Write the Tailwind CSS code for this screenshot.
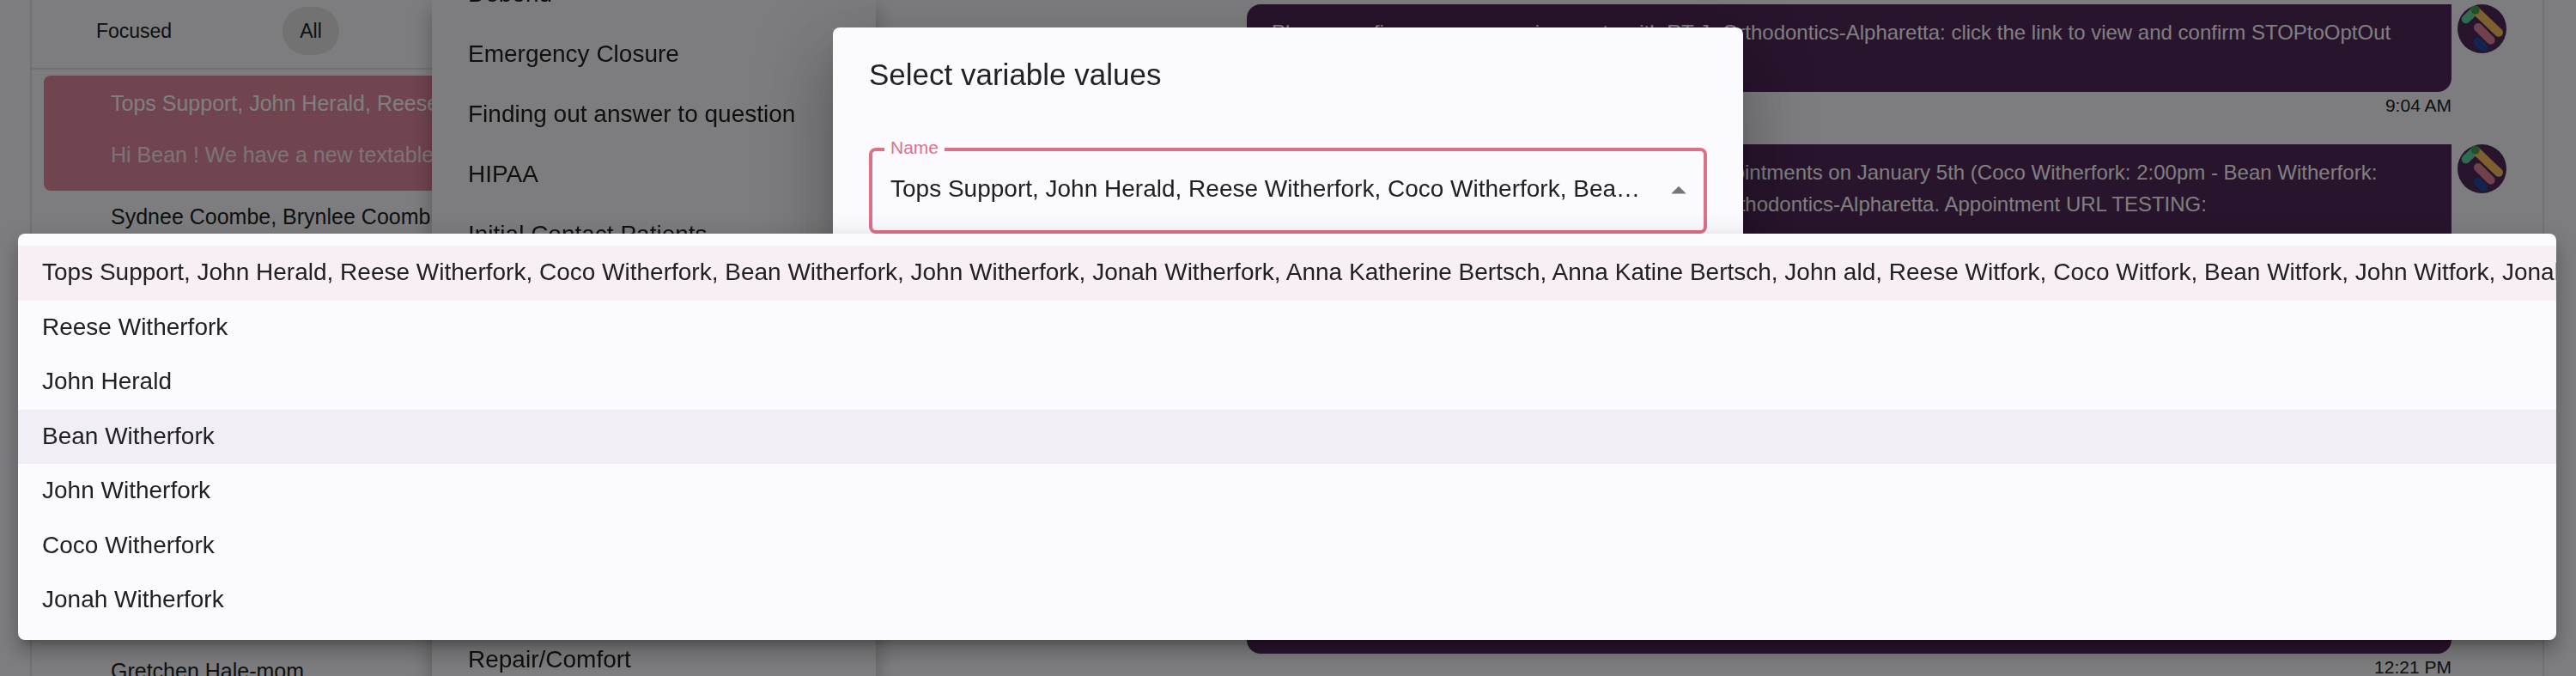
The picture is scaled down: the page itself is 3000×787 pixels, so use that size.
<!DOCTYPE html>
<html lang="en">
  <head>
    <meta charset="UTF-8" />
    <meta name="viewport" content="width=device-width, initial-scale=1.0" />
    <title>Messages</title>
    <script src="https://cdn.jsdelivr.net/npm/@tailwindcss/browser@4"></script>
  </head>
  <body
    class="h-screen overflow-hidden bg-[#fbfbfe] font-['Liberation_Sans',Arial,sans-serif] text-[#212121]"
  >
    <svg class="hidden">
      <symbol id="avatar" viewBox="0 0 57 57">
        <circle cx="28.5" cy="28.5" r="28.5" fill="#50285a" />
        <g stroke-width="10" stroke-linecap="round" fill="none">
          <path d="M9.7 17.3 20.7 6.8" stroke="#5ed6a2" />
          <path d="M20.7 6.8 48 32.8" stroke="#f8c05c" />
          <path d="M24 27 38.7 41.7" stroke="#e0809a" />
          <path d="M23.5 43.5 30 50" stroke="#2448a0" />
        </g>
        <circle cx="20.7" cy="6.8" r="5" fill="#469f50" />
      </symbol>
    </svg>

    <div class="ml-[35px] mr-[37px] flex h-screen border-x-2 border-[#e4e4e8]">
      <!-- Conversations -->
      <aside class="flex w-[620px] shrink-0 flex-col text-[25px]">
        <div class="flex border-b-2 border-[#e4e4e8] pt-2 pb-[15px] pl-4 text-[23px]">
          <div class="flex w-[206px] justify-center">
            <button class="h-14 rounded-full px-5">Focused</button>
          </div>
          <div class="flex w-[206px] justify-center">
            <button class="h-14 rounded-full bg-[#e4e4e6] px-5">All</button>
          </div>
        </div>
        <ul class="flex grow flex-col px-3.5 pt-[7px] leading-[60px]">
          <li class="overflow-hidden rounded-lg bg-[#e08a9e] pt-0.5 pb-3 pl-[78px] whitespace-nowrap text-white">
            <p>Tops Support, John Herald, Reese Witherfork</p>
            <p class="text-white/80">Hi Bean ! We have a new textable number</p>
          </li>
          <li class="pl-[78px]">Sydnee Coombe, Brynlee Coomb...</li>
          <li class="-mb-6 mt-auto pl-[78px]">Gretchen Hale-mom</li>
        </ul>
      </aside>

      <!-- Messages -->
      <main class="flex grow flex-col pt-[5px] pr-[42px] text-2xl leading-[37px]">
        <article class="mb-[29px] flex justify-end gap-[7px]">
          <div class="w-full max-w-[1403px]">
            <p class="rounded-2xl rounded-tr-none bg-[#50285a] p-[14px] pl-[29px] text-white">
              Please confirm your new assignments with RT Jr Orthodontics-Alpharetta: click the link to view and confirm STOPtoOptOut<br /><br />
            </p>
            <time class="block text-right text-[21px] leading-8">9:04 AM</time>
          </div>
          <svg class="size-[57px] shrink-0"><use href="#avatar" /></svg>
        </article>
        <article class="flex justify-end gap-[7px]">
          <div class="w-full max-w-[1403px]">
            <p class="rounded-2xl rounded-tr-none bg-[#50285a] p-[14px] pl-[29px] text-white">
              Hello Sydnee, Please confirm these upcoming appointments on January 5th (Coco Witherfork: 2:00pm - Bean Witherfork:<br />
              12:00pm - Jonah Witherfork: 2:00pm) with RT Jr Orthodontics-Alpharetta. Appointment URL TESTING:<br /><br />
            </p>
          </div>
          <svg class="size-[57px] shrink-0"><use href="#avatar" /></svg>
        </article>
        <article class="-mb-1.5 mt-auto flex justify-end gap-[7px]">
          <div class="w-full max-w-[1403px]">
            <p class="rounded-2xl rounded-tr-none bg-[#50285a] p-[14px] pl-[29px] text-white">
              Hello Sydnee,<br />
              Please confirm your new assignments with RT Jr Orthodontics-Alpharetta<br />
              Thank you!<br /><br />
            </p>
            <time class="block text-right text-[21px] leading-8">12:21 PM</time>
          </div>
          <svg class="size-[57px] shrink-0"><use href="#avatar" /></svg>
        </article>
      </main>
    </div>

    <!-- Template menu -->
    <div
      class="fixed inset-y-0 left-[503px] flex w-[517px] flex-col bg-[#fbfbfe] text-[28px] leading-[70px] shadow-[0_10px_10px_-6px_rgb(0_0_0/0.2),0_16px_20px_2px_rgb(0_0_0/0.14),0_6px_28px_4px_rgb(0_0_0/0.12)]"
    >
      <ul class="-mt-[42px] -mb-4 flex grow flex-col px-[42px]">
        <li>Debond</li>
        <li>Emergency Closure</li>
        <li>Finding out answer to question</li>
        <li>HIPAA</li>
        <li>Initial Contact Patients</li>
        <li class="mt-auto">Repair/Comfort</li>
      </ul>
    </div>

    <!-- Dialog -->
    <div class="fixed inset-0 flex items-start justify-center bg-black/50 pt-8">
      <div
        role="dialog"
        aria-labelledby="dialogTitle"
        class="w-full max-w-[1060px] rounded-lg bg-[#fbfaff] px-[42px] py-7 shadow-[0_22px_30px_-14px_rgb(0_0_0/0.2),0_48px_76px_6px_rgb(0_0_0/0.14),0_18px_92px_16px_rgb(0_0_0/0.12)]"
      >
        <h2 id="dialogTitle" class="text-[35px] leading-[54px]">Select variable values</h2>
        <div class="relative mt-[58px] mb-14 rounded-lg border-4 border-[#dc718a]">
          <label
            for="name"
            class="absolute -top-4 left-3.5 bg-[#fbfaff] px-[7px] text-[21px] leading-6 text-[#dc718a]"
            >Name</label
          >
          <select
            id="name"
            class="block h-[92px] w-full appearance-none truncate bg-transparent pr-16 pb-1 pl-[21px] text-[28px] outline-none"
          >
            <option>
              Tops Support, John Herald, Reese Witherfork, Coco Witherfork, Bean Witherfork, John Witherfork
            </option>
          </select>
          <svg
            class="pointer-events-none absolute inset-y-0 right-2 my-auto size-[42px]"
            viewBox="0 0 24 24"
            fill="#757575"
          >
            <path d="m7 14 5-5 5 5z" />
          </svg>
        </div>
      </div>
    </div>

    <!-- Open option list -->
    <ul
      role="listbox"
      aria-label="Name"
      class="fixed top-[272px] right-[23px] left-[21px] grid min-h-[473px] auto-rows-fr overflow-hidden rounded-lg bg-[#fbfaff] py-3.5 text-[28px] leading-[61px] whitespace-nowrap shadow-[0_10px_10px_-6px_rgb(0_0_0/0.2),0_16px_20px_2px_rgb(0_0_0/0.14),0_6px_28px_4px_rgb(0_0_0/0.12)]"
    >
      <li role="option" aria-selected="true" class="overflow-hidden bg-[#f8eef5] pl-7">
        Tops Support, John Herald, Reese Witherfork, Coco Witherfork, Bean Witherfork, John Witherfork, Jonah Witherfork, Anna Katherine Bertsch, Anna Katine Bertsch, John ald, Reese Witfork, Coco Witfork, Bean Witfork, John Witfork, Jonah Witfork
      </li>
      <li role="option" class="pl-7">Reese Witherfork</li>
      <li role="option" class="pl-7">John Herald</li>
      <li role="option" class="bg-[#f1eff5] pl-7">Bean Witherfork</li>
      <li role="option" class="pl-7">John Witherfork</li>
      <li role="option" class="pl-7">Coco Witherfork</li>
      <li role="option" class="pl-7">Jonah Witherfork</li>
    </ul>
  </body>
</html>
